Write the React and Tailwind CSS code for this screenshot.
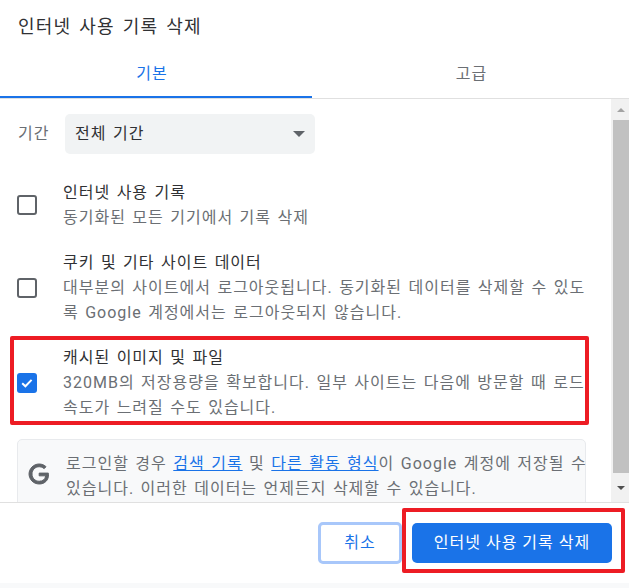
const FONT = 'font-["Roboto","Noto_Sans_CJK_KR",sans-serif]'
const BODY = 'text-[16px] tracking-[1px] [word-spacing:1.5px]'

const ROWS = [
  {
    title: '인터넷 사용 기록',
    lines: ['동기화된 모든 기기에서 기록 삭제'],
    checked: false,
  },
  {
    title: '쿠키 및 기타 사이트 데이터',
    lines: [
      '대부분의 사이트에서 로그아웃됩니다. 동기화된 데이터를 삭제할 수 있도',
      '록 Google 계정에서는 로그아웃되지 않습니다.',
    ],
    checked: false,
  },
  {
    title: '캐시된 이미지 및 파일',
    lines: [
      '320MB의 저장용량을 확보합니다. 일부 사이트는 다음에 방문할 때 로드',
      '속도가 느려질 수도 있습니다.',
    ],
    checked: true,
  },
]

function Checkbox({ checked }) {
  if (checked) {
    return (
      <span className="w-5 h-5 rounded-[3px] bg-[#1a73e8] flex items-center justify-center shrink-0">
        <svg className="w-4 h-4" viewBox="0 0 16 16" fill="none" stroke="white" strokeWidth={2}>
          <path d="M3.2 8.2l3.2 3.1 6.2-6.4" />
        </svg>
      </span>
    )
  }
  return <span className="w-5 h-5 rounded-[3px] border-2 border-[#5f6368] shrink-0" />
}

function Row({ row }) {
  return (
    <div className="flex items-center pl-[17px] mb-5">
      <Checkbox checked={row.checked} />
      <div className={`ml-[26px] leading-[25px] whitespace-nowrap ${BODY}`}>
        <div className="text-[#303134]">{row.title}</div>
        {row.lines.map((l) => (
          <div key={l} className="text-[#6b6f74]">{l}</div>
        ))}
      </div>
    </div>
  )
}

function Scrollbar() {
  return (
    <div className="w-[18px] shrink-0 bg-[#f1f1f1] pl-[2px] flex flex-col">
      <div className="h-[21px] flex items-center justify-center">
        <span className="w-0 h-0 border-x-[4px] border-x-transparent border-b-[4px] border-b-[#a3a3a3]" />
      </div>
      <div className="h-[353px] bg-[#c1c1c1]" />
      <div className="flex-1 flex items-center justify-center">
        <span className="w-0 h-0 border-x-[4px] border-x-transparent border-t-[4px] border-t-[#505050]" />
      </div>
    </div>
  )
}

export default function App() {
  return (
    <div className={`relative w-[629px] h-[588px] bg-white overflow-hidden flex flex-col ${FONT}`}>
      <h1 className="h-[54px] pl-[18px] pt-[13px] text-[18px] leading-[28px] tracking-[1.2px] [word-spacing:2.3px] font-normal text-[#303134] shrink-0">
        인터넷 사용 기록 삭제
      </h1>

      <div className={`h-[45px] flex items-start border-b border-[#e0e0e0] shrink-0 ${BODY}`}>
        <div className="w-[312px] h-[44px] pb-[3px] border-b-2 border-[#1a73e8] text-[#1a73e8] flex items-center justify-center pr-[8px]">
          기본
        </div>
        <div className="flex-1 h-[44px] pb-[5px] text-[#6b6f74] flex items-center justify-center pl-[2px]">고급</div>
      </div>

      <div className="flex h-[404px] shrink-0 border-b border-[#e0e0e0]">
        <div className="flex-1 overflow-hidden pt-[15px]">
          <div className={`flex items-center h-10 mb-[26px] ${BODY}`}>
            <span className="ml-[18px] w-[47px] text-[#6b6f74]">기간</span>
            <div className="w-[250px] h-10 bg-[#f1f3f4] rounded-[5px] flex items-center justify-between pl-[10px] pr-[10px] text-[#303134]">
              전체 기간
              <span className="w-0 h-0 border-x-[6px] border-x-transparent border-t-[6px] border-t-[#5f6368]" />
            </div>
          </div>

          {ROWS.map((r) => (
            <Row key={r.title} row={r} />
          ))}

          <div className={`ml-[17px] w-[569px] h-[100px] -mt-px border border-[#e8eaed] rounded-[5px] bg-[#f8f9fa] flex pt-[11px] leading-[25px] text-[#6b6f74] ${BODY}`}>
            <svg className="w-[24px] h-[24px] ml-[9px] mt-[11px] shrink-0" viewBox="0 0 24 24" fill="#5f6368" stroke="#5f6368" strokeWidth={1}>
              <path d="M21.35 11.1h-9.17v2.73h6.51c-.33 3.81-3.5 5.44-6.5 5.44C8.36 19.27 5 16.25 5 12c0-4.1 3.2-7.27 7.2-7.27 3.09 0 4.9 1.97 4.9 1.97L19 4.72S16.56 2 12.1 2C6.42 2 2.03 6.8 2.03 12c0 5.05 4.13 10 10.22 10 5.35 0 9.25-3.67 9.25-9.09 0-1.15-.15-1.81-.15-1.81Z" />
            </svg>
            <div className="ml-[15px] whitespace-nowrap">
              <div>
                로그인할 경우 <span className="text-[#1a73e8] underline">검색 기록</span> 및{' '}
                <span className="text-[#1a73e8] underline">다른 활동 형식</span>이 Google 계정에 저장될 수
              </div>
              <div>있습니다. 이러한 데이터는 언제든지 삭제할 수 있습니다.</div>
            </div>
          </div>
        </div>
        <Scrollbar />
      </div>

      <div className={`h-[80px] shrink-0 flex items-center justify-end pr-[17px] gap-[10px] ${BODY}`}>
        <button className="w-[84px] h-[42px] rounded-[5px] border-[3px] border-[#a8c7fa] text-[#1a73e8] bg-white">
          취소
        </button>
        <button className="w-[200px] h-10 rounded-[5px] bg-[#1a73e8] text-white">
          인터넷 사용 기록 삭제
        </button>
      </div>
      <div className="flex-1 bg-[#f8f9fa]" />

      {/* red annotation boxes drawn on top of the dialog */}
      <div className="absolute left-[10px] top-[336px] w-[579px] h-[89px] border-4 border-[#ed1c24] rounded-[2px] pointer-events-none" />
      <div className="absolute left-[402px] top-[508px] w-[223px] h-[65px] border-4 border-[#ed1c24] rounded-[2px] pointer-events-none" />
    </div>
  )
}
